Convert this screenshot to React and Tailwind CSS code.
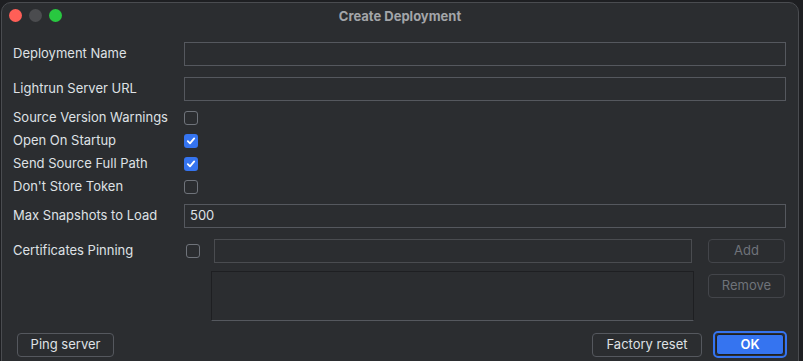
const FONT = 'font-["Inter","Liberation_Sans",sans-serif]'

function Check({ checked }) {
  if (checked) {
    return (
      <div className="w-[14px] h-[14px] rounded-[3px] bg-[#3574f0] flex items-center justify-center">
        <svg width="10" height="10" viewBox="0 0 10 10">
          <path d="M1.8 5.2 L4 7.4 L8.2 2.4" fill="none" stroke="#fff" strokeWidth="1.8" strokeLinecap="round" strokeLinejoin="round" />
        </svg>
      </div>
    )
  }
  return <div className="w-[14px] h-[14px] rounded-[3px] border border-[#6f737a]" />
}

function Label({ children }) {
  return <div className="w-[171px] shrink-0 text-[13px] text-[#dfe1e5]">{children}</div>
}

function Field({ value }) {
  return (
    <div className="flex-1 h-[24px] border border-[#55585e] flex items-center px-[5px] text-[13px] text-[#dfe1e5]">
      {value}
    </div>
  )
}

function Button({ children, className = '', disabled }) {
  return (
    <div
      className={`h-[24px] rounded-[4px] border flex items-center justify-center text-[13px] ${
        disabled ? 'border-[#43454a] text-[#6f737a]' : 'border-[#55585e] text-[#dfe1e5]'
      } ${className}`}
    >
      {children}
    </div>
  )
}

export default function App() {
  return (
    <div className={`w-[803px] h-[361px] bg-[#1e1f22] overflow-hidden ${FONT}`}>
      <div className="ml-[1px] mt-[2px] w-[798px] h-[370px] rounded-t-[10px] border border-[#4a4c50] bg-[#2b2d30] flex flex-col">
        {/* Title bar */}
        <div className="h-[28px] shrink-0 relative flex items-center justify-center">
          <div className="absolute left-[7px] top-[6px] flex gap-[7px]">
            <span className="w-[13px] h-[13px] rounded-full bg-[#ff5f57]" />
            <span className="w-[13px] h-[13px] rounded-full bg-[#4b4c4f]" />
            <span className="w-[13px] h-[13px] rounded-full bg-[#28c840]" />
          </div>
          <div className="text-[13px] font-bold text-[#a3a5a9]">Create Deployment</div>
        </div>

        {/* Form */}
        <div className="pl-[11px] pr-[12px] flex flex-col">
          <div className="mt-[11px] flex items-center">
            <Label>Deployment Name</Label>
            <Field />
          </div>
          <div className="mt-[11px] flex items-center">
            <Label>Lightrun Server URL</Label>
            <Field />
          </div>
          <div className="mt-[5px] flex flex-col">
            {[
              ['Source Version Warnings', false],
              ['Open On Startup', true],
              ['Send Source Full Path', true],
              ["Don't Store Token", false],
            ].map(([label, checked]) => (
              <div key={label} className="h-[23px] flex items-center">
                <Label>{label}</Label>
                <Check checked={checked} />
              </div>
            ))}
          </div>
          <div className="mt-[6px] flex items-center">
            <Label>Max Snapshots to Load</Label>
            <Field value="500" />
          </div>

          <div className="mt-[11px] flex">
            <div className="h-[24px] flex items-center">
              <Label>Certificates Pinning</Label>
              <div className="w-[27px] shrink-0 pl-[2px]">
                <Check />
              </div>
            </div>
            <div className="w-[483px] flex flex-col">
              <div className="ml-[3px] w-[478px] h-[24px] border border-[#4a4c50]" />
              <div className="mt-[8px] h-[50px] border border-[#1e1f22] border-b-[#55585e] bg-[#2b2d30]" />
            </div>
            <div className="ml-[14px] w-[77px] flex flex-col gap-[11px]">
              <Button disabled>Add</Button>
              <Button disabled>Remove</Button>
            </div>
          </div>
        </div>

        {/* Footer */}
        <div className="mt-[10px] pl-[15px] pr-[11px] flex items-center">
          <Button className="w-[97px]">Ping server</Button>
          <div className="flex-1" />
          <Button className="w-[110px]">Factory reset</Button>
          <div className="ml-[11px] w-[74px] h-[27px] rounded-[5px] border-2 border-[#3574f0] p-[1px]">
            <div className="h-full rounded-[3px] bg-[#3574f0] border border-[#1e1f22] flex items-center justify-center text-[13px] font-semibold text-white">
              OK
            </div>
          </div>
        </div>
      </div>
    </div>
  )
}
